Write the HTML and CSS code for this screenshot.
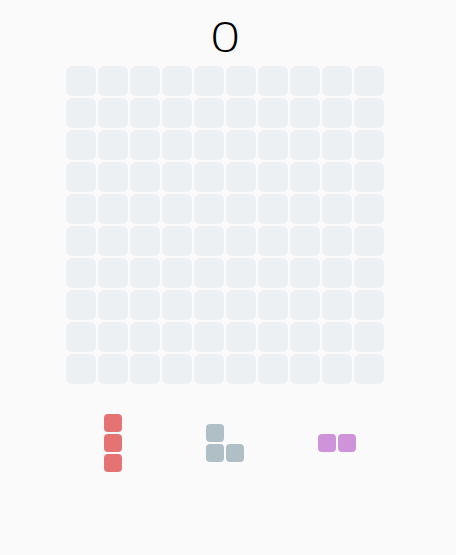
FILE: index.html
```html
<!DOCTYPE html>
<html>
<head>
<meta charset="utf-8">
<link rel="stylesheet" href="styles.css">
</head>
<body>
<div class="app">
  <div class="score">0</div>
  <div class="board" id="board"></div>
  <div class="tray">
    <div class="slot">
      <div class="piece piece-red">
        <span class="blk" style="grid-row:1;grid-column:1"></span>
        <span class="blk" style="grid-row:2;grid-column:1"></span>
        <span class="blk" style="grid-row:3;grid-column:1"></span>
      </div>
    </div>
    <div class="slot">
      <div class="piece piece-grey">
        <span class="blk" style="grid-row:1;grid-column:1"></span>
        <span class="blk" style="grid-row:2;grid-column:1"></span>
        <span class="blk" style="grid-row:2;grid-column:2"></span>
      </div>
    </div>
    <div class="slot">
      <div class="piece piece-purple">
        <span class="blk" style="grid-row:1;grid-column:1"></span>
        <span class="blk" style="grid-row:1;grid-column:2"></span>
      </div>
    </div>
  </div>
</div>
<script>
  var b = document.getElementById('board');
  for (var i = 0; i < 100; i++) {
    var c = document.createElement('div');
    c.className = 'cell';
    b.appendChild(c);
  }
</script>
</body>
</html>
```

FILE: styles.css
```css
html, body {
  margin: 0;
  padding: 0;
  background: #fafafa;
}
body {
  width: 456px;
  height: 555px;
  overflow: hidden;
  font-family: "Liberation Sans", Arial, sans-serif;
}
.app {
  width: 450px;
  display: flex;
  flex-direction: column;
  align-items: center;
  padding-top: 17px;
}
.score {
  font-family: "Open Sans", sans-serif;
  font-weight: 300;
  font-size: 43px;
  line-height: 37px;
  height: 40px;
  color: #000;
  margin-bottom: 9px;
  transform: scaleX(1.22);
}
.board {
  display: grid;
  grid-template-columns: repeat(10, 30px);
  grid-auto-rows: 30px;
  gap: 2px;
}
.cell {
  background: #edf0f2;
  border-radius: 6px;
}
.tray {
  display: flex;
  justify-content: center;
  margin-top: 19px;
}
.slot {
  width: 112px;
  height: 80px;
  display: flex;
  align-items: center;
  justify-content: center;
}
.piece {
  display: grid;
  grid-auto-columns: 18px;
  grid-auto-rows: 18px;
  gap: 2px;
}
.blk {
  display: block;
  border-radius: 4px;
}
.piece-red .blk { background: #e57373; }
.piece-grey .blk { background: #b0bec5; }
.piece-purple .blk { background: #ce93d8; }
```
